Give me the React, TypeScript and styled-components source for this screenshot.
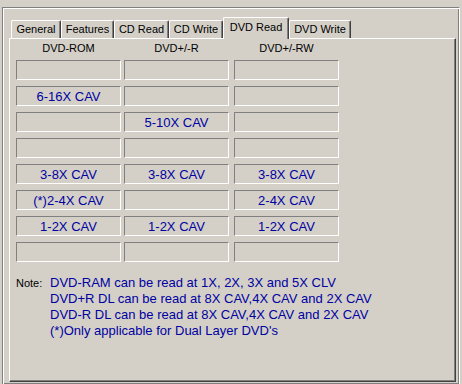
import React from "react";
import styled, { createGlobalStyle } from "styled-components";

const GlobalStyle = createGlobalStyle`
  html, body { margin: 0; padding: 0; background: #d4d0c8; }
  body { font-family: "Liberation Sans", Arial, sans-serif; }
`;

const Screen = styled.div`
  width: 462px;
  height: 384px;
  background: #d4d0c8;
  overflow: hidden;
  padding: 7px 0 0 2px;
  box-sizing: border-box;
`;

const Frame = styled.div`
  width: 458px;
  height: 378px;
  box-sizing: border-box;
  border-top: 1px solid #808080;
  border-left: 1px solid #808080;
  border-right: 1px solid #ffffff;
  border-bottom: 1px solid #ffffff;
  box-shadow: inset 1px 1px 0 #ffffff, inset -1px -1px 0 #808080;
  padding: 9px 0 0 6px;
`;

const TabControl = styled.div`
  width: 447px;
  display: flex;
  flex-direction: column;
`;

const TabStrip = styled.div`
  display: flex;
  align-items: flex-end;
  height: 21px;
  padding-left: 2px;
`;

const Tab = styled.div<{ $w: number; $active?: boolean }>`
  position: relative;
  z-index: ${(p) => (p.$active ? 1 : 0)};
  width: ${(p) => p.$w}px;
  height: ${(p) => (p.$active ? 22 : 18)}px;
  margin-bottom: ${(p) => (p.$active ? -1 : 0)}px;
  box-sizing: border-box;
  background: #d4d0c8;
  border-top: 1px solid #ffffff;
  border-left: 1px solid #ffffff;
  border-right: 1px solid #404040;
  border-radius: 2px 2px 0 0;
  box-shadow: inset -1px 0 0 #808080;
  font-size: 11px;
  color: #000;
  display: flex;
  justify-content: center;
  padding-top: ${(p) => (p.$active ? 3 : 2)}px;
  line-height: 13px;
  white-space: nowrap;
`;

const Panel = styled.div`
  height: 344px;
  box-sizing: border-box;
  border-top: 1px solid #ffffff;
  border-left: 1px solid #ffffff;
  border-right: 1px solid #404040;
  border-bottom: 1px solid #404040;
  box-shadow: inset -1px -1px 0 #808080;
  padding: 0 0 0 6px;
`;

const Columns = styled.div`
  display: grid;
  grid-template-columns: 105px 108px 110px;
`;

const HeaderRow = styled(Columns)`
  height: 21px;
`;

const Grid = styled(Columns)`
  grid-auto-rows: 20px;
  row-gap: 6px;
`;

const Header = styled.div`
  justify-self: end;
  width: 105px;
  padding-top: 3px;
  text-align: center;
  font-size: 11px;
  line-height: 13px;
  color: #000;
`;

const Cell = styled.div`
  justify-self: end;
  width: 105px;
  height: 20px;
  box-sizing: border-box;
  border-top: 1px solid #808080;
  border-left: 1px solid #808080;
  border-right: 1px solid #ffffff;
  border-bottom: 1px solid #ffffff;
  display: flex;
  align-items: center;
  justify-content: center;
  font-size: 13px;
  color: #0000a0;
  white-space: nowrap;
`;

const Note = styled.div`
  display: grid;
  grid-template-columns: 34px auto;
  margin-top: 13px;
  line-height: 16px;
`;

const NoteLabel = styled.div`
  font-size: 11px;
  color: #000;
`;

const NoteLines = styled.div`
  font-size: 13px;
  color: #0000a0;
  white-space: nowrap;
`;

const tabs = [
  { label: "General", w: 50 },
  { label: "Features", w: 53 },
  { label: "CD Read", w: 55 },
  { label: "CD Write", w: 54 },
  { label: "DVD Read", w: 66, active: true },
  { label: "DVD Write", w: 62 },
];

const rows: string[][] = [
  ["", "", ""],
  ["6-16X CAV", "", ""],
  ["", "5-10X CAV", ""],
  ["", "", ""],
  ["3-8X CAV", "3-8X CAV", "3-8X CAV"],
  ["(*)2-4X CAV", "", "2-4X CAV"],
  ["1-2X CAV", "1-2X CAV", "1-2X CAV"],
  ["", "", ""],
];

const notes = [
  "DVD-RAM can be read at 1X, 2X, 3X and 5X CLV",
  "DVD+R DL can be read at 8X CAV,4X CAV and 2X CAV",
  "DVD-R DL can be read at 8X CAV,4X CAV and 2X CAV",
  "(*)Only applicable for Dual Layer DVD's",
];

export default function App() {
  return (
    <>
      <GlobalStyle />
      <Screen>
        <Frame>
          <TabControl>
            <TabStrip>
              {tabs.map((t) => (
                <Tab key={t.label} $w={t.w} $active={t.active}>
                  {t.label}
                </Tab>
              ))}
            </TabStrip>
            <Panel>
              <HeaderRow>
                <Header>DVD-ROM</Header>
                <Header>DVD+/-R</Header>
                <Header>DVD+/-RW</Header>
              </HeaderRow>
              <Grid>
                {rows.flatMap((r, i) =>
                  r.map((c, j) => <Cell key={`${i}-${j}`}>{c}</Cell>)
                )}
              </Grid>
              <Note>
                <NoteLabel>Note:</NoteLabel>
                <NoteLines>
                  {notes.map((n) => (
                    <div key={n}>{n}</div>
                  ))}
                </NoteLines>
              </Note>
            </Panel>
          </TabControl>
        </Frame>
      </Screen>
    </>
  );
}
